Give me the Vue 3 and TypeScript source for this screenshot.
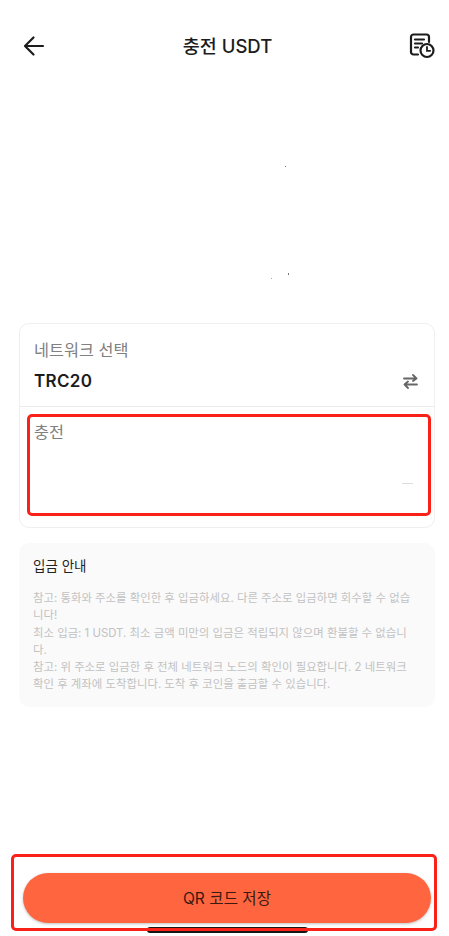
<script setup lang="ts">
const notices: string[] = [
  '참고: 통화와 주소를 확인한 후 입금하세요. 다른 주소로 입금하면 회수할 수 없습니다!',
  '최소 입금: 1 USDT. 최소 금액 미만의 입금은 적립되지 않으며 환불할 수 없습니다.',
  '참고: 위 주소로 입금한 후 전체 네트워크 노드의 확인이 필요합니다. 2 네트워크 확인 후 계좌에 도착합니다. 도착 후 코인을 출금할 수 있습니다.',
];
</script>

<template>
  <div class="page">
    <header class="topbar">
      <svg class="back" width="24" height="24" viewBox="0 0 24 24" fill="none" stroke="#1c1c1c" stroke-width="2.2" stroke-linecap="round" stroke-linejoin="round">
        <path d="M21 12H3.500M11.500 3.500 3 12l8.500 8.500" />
      </svg>
      <h1 class="title">충전 USDT</h1>
      <svg class="history" width="26" height="26" viewBox="0 0 26 26" fill="none" stroke="#1c1c1c" stroke-width="2.2" stroke-linecap="round">
        <path d="M9 21.500H4.500A2.500 2.500 0 0 1 2 19V4A2.500 2.500 0 0 1 4.500 1.500h13A2.500 2.500 0 0 1 20 4v5" />
        <path d="M6 6.500h9M6 10.500h7M6 14.500h3" />
        <circle cx="18" cy="17.500" r="6.500" />
        <path d="M18 14v3.800h3.200" stroke-width="1.800" />
      </svg>
    </header>

    <section class="qr-area">
      <i class="speck speck-a"></i>
      <i class="speck speck-b"></i>
      <i class="speck speck-c"></i>
    </section>

    <section class="card">
      <div class="network">
        <div class="label">네트워크 선택</div>
        <div class="network-row">
          <span class="network-name">TRC20</span>
          <svg width="15" height="15" viewBox="0 0 15 15" fill="none" stroke="#666" stroke-width="1.800" stroke-linecap="round" stroke-linejoin="round">
            <path d="M1 4.500h12.500M10 1l3.500 3.500L10 7" />
            <path d="M14 10.500H1.500M5 7.500l-3.500 3L5 14" />
          </svg>
        </div>
      </div>
      <div class="address">
        <div class="label">충전</div>
        <i class="dash"></i>
      </div>
    </section>

    <section class="notice">
      <h2 class="notice-title">입금 안내</h2>
      <p v-for="(line, i) in notices" :key="i" class="notice-line">{{ line }}</p>
    </section>

    <footer class="footer">
      <button class="save" type="button">QR 코드 저장</button>
      <div class="home-bar"></div>
    </footer>

    <div class="mark mark-address"></div>
    <div class="mark mark-save"></div>
  </div>
</template>

<style scoped>
.page {
  position: relative;
  box-sizing: border-box;
  display: flex;
  flex-direction: column;
  width: 449px;
  height: 936px;
  overflow: hidden;
  background: #fff;
  font-family: "Inter", "Noto Sans CJK KR", sans-serif;
  color: #1c1c1c;
}

.topbar {
  display: flex;
  align-items: center;
  justify-content: space-between;
  height: 32px;
  margin-top: 30px;
  padding: 0 14px 0 22px;
}

.title {
  margin: 0;
  font-size: 18.500px;
  font-weight: 500;
  line-height: 32px;
}

.qr-area {
  position: relative;
  height: 261px;
}

.speck {
  position: absolute;
  width: 1px;
  height: 1px;
  background: #777;
}

.speck-a { left: 285px; top: 104px; }
.speck-b { left: 288px; top: 211px; height: 2px; }
.speck-c { left: 271px; top: 216px; background: #aaa; }

.card {
  margin: 0 14px 0 19px;
  border: 1px solid #efefef;
  border-radius: 10px;
  height: 205px;
  box-sizing: border-box;
}

.network {
  height: 83px;
  box-sizing: border-box;
  padding: 14px 16px 0 14px;
  border-bottom: 1px solid #ececec;
}

.label {
  font-size: 16.300px;
  line-height: 24px;
  color: #808080;
}

.network-row {
  display: flex;
  align-items: center;
  justify-content: space-between;
  margin-top: 7px;
}

.network-name {
  font-size: 17px;
  font-weight: 600;
  letter-spacing: 0.300px;
  line-height: 24px;
}

.address {
  position: relative;
  padding: 13px 14px 0;
}

.dash {
  position: absolute;
  top: 76px;
  right: 21px;
  width: 11px;
  height: 1px;
  background: #ddd;
}

.notice {
  box-sizing: border-box;
  height: 164px;
  margin: 15px 14px 0 19px;
  padding: 14px 18px 0 14px;
  border-radius: 10px;
  background: #fafafa;
}

.notice-title {
  margin: 0 0 15px;
  font-size: 13.500px;
  font-weight: 400;
  line-height: 18px;
  color: #222;
}

.notice-line {
  margin: 0;
  font-size: 11.400px;
  line-height: 17.300px;
  color: #c2c2c2;
  word-break: break-all;
}

.footer {
  position: relative;
  margin-top: auto;
  height: 63px;
  padding: 0 18px 0 23px;
}

.save {
  display: block;
  width: 408px;
  height: 50px;
  padding: 0 0 2px;
  border: 0;
  border-radius: 25px;
  background: #ff6640;
  box-shadow: 0 1px 3px rgba(0, 0, 0, 0.25);
  font-family: inherit;
  font-size: 15.600px;
  color: #3a1a10;
}

.home-bar {
  position: absolute;
  left: 147px;
  bottom: 3px;
  width: 161px;
  height: 6px;
  border-radius: 3px;
  background: #161616;
}

.mark {
  position: absolute;
  box-sizing: border-box;
  border: 3px solid #fa2119;
  border-radius: 5px;
}

.mark-address {
  left: 27px;
  top: 414px;
  width: 404px;
  height: 102px;
}

.mark-save {
  left: 11px;
  top: 854px;
  width: 426px;
  height: 77px;
}
</style>
